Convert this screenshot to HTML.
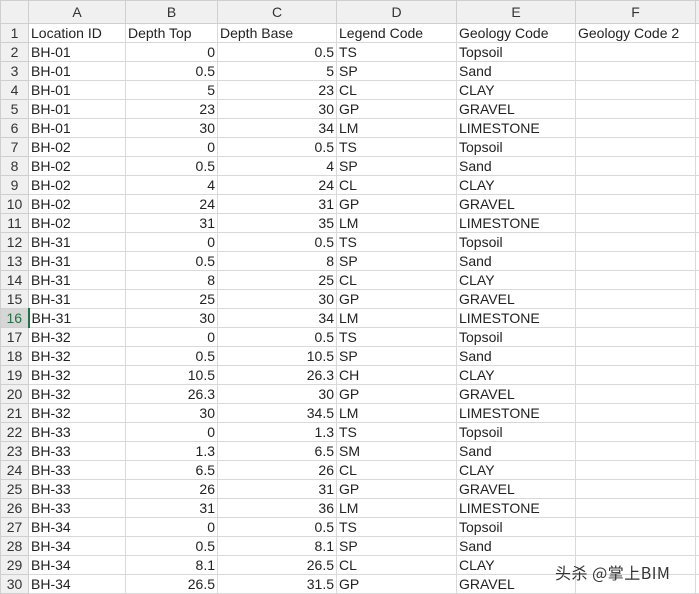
<!DOCTYPE html>
<html><head><meta charset="utf-8"><style>
*{margin:0;padding:0;box-sizing:border-box}
body{width:699px;height:594px;overflow:hidden;background:#fff;font-family:"Liberation Sans","Noto Sans CJK SC",sans-serif;font-size:14px;color:#222;position:relative}
table{border-collapse:collapse;table-layout:fixed;position:absolute;left:0;top:0;width:699px}
td{border:1px solid #d9d9d9;height:19px;line-height:17px;padding:0 2px;white-space:nowrap;overflow:hidden}
tr.h td{height:23px;background:#f0f0f0;text-align:center;color:#333;border-color:#cfcfcf}
td.r{background:#f0f0f0;text-align:center;color:#333;border-color:#cfcfcf;padding:0}
td.n{text-align:right}
td.sel{background:#d6d6d6;border-right:2px solid #217346;color:#217346}
.wm{position:absolute;left:555px;top:560px;font-size:16px;color:#333;font-family:"Noto Sans CJK SC",sans-serif;letter-spacing:0.5px}
</style></head><body>
<table>
<colgroup><col style="width:28px"><col style="width:97px"><col style="width:92px"><col style="width:119px"><col style="width:120px"><col style="width:119px"><col style="width:120px"><col style="width:4px"></colgroup>
<tr class="h"><td></td><td>A</td><td>B</td><td>C</td><td>D</td><td>E</td><td>F</td><td></td></tr>
<tr><td class="r">1</td><td>Location ID</td><td>Depth Top</td><td>Depth Base</td><td>Legend Code</td><td>Geology Code</td><td>Geology Code 2</td><td></td></tr>
<tr><td class="r">2</td><td>BH-01</td><td class="n">0</td><td class="n">0.5</td><td>TS</td><td>Topsoil</td><td></td><td></td></tr>
<tr><td class="r">3</td><td>BH-01</td><td class="n">0.5</td><td class="n">5</td><td>SP</td><td>Sand</td><td></td><td></td></tr>
<tr><td class="r">4</td><td>BH-01</td><td class="n">5</td><td class="n">23</td><td>CL</td><td>CLAY</td><td></td><td></td></tr>
<tr><td class="r">5</td><td>BH-01</td><td class="n">23</td><td class="n">30</td><td>GP</td><td>GRAVEL</td><td></td><td></td></tr>
<tr><td class="r">6</td><td>BH-01</td><td class="n">30</td><td class="n">34</td><td>LM</td><td>LIMESTONE</td><td></td><td></td></tr>
<tr><td class="r">7</td><td>BH-02</td><td class="n">0</td><td class="n">0.5</td><td>TS</td><td>Topsoil</td><td></td><td></td></tr>
<tr><td class="r">8</td><td>BH-02</td><td class="n">0.5</td><td class="n">4</td><td>SP</td><td>Sand</td><td></td><td></td></tr>
<tr><td class="r">9</td><td>BH-02</td><td class="n">4</td><td class="n">24</td><td>CL</td><td>CLAY</td><td></td><td></td></tr>
<tr><td class="r">10</td><td>BH-02</td><td class="n">24</td><td class="n">31</td><td>GP</td><td>GRAVEL</td><td></td><td></td></tr>
<tr><td class="r">11</td><td>BH-02</td><td class="n">31</td><td class="n">35</td><td>LM</td><td>LIMESTONE</td><td></td><td></td></tr>
<tr><td class="r">12</td><td>BH-31</td><td class="n">0</td><td class="n">0.5</td><td>TS</td><td>Topsoil</td><td></td><td></td></tr>
<tr><td class="r">13</td><td>BH-31</td><td class="n">0.5</td><td class="n">8</td><td>SP</td><td>Sand</td><td></td><td></td></tr>
<tr><td class="r">14</td><td>BH-31</td><td class="n">8</td><td class="n">25</td><td>CL</td><td>CLAY</td><td></td><td></td></tr>
<tr><td class="r">15</td><td>BH-31</td><td class="n">25</td><td class="n">30</td><td>GP</td><td>GRAVEL</td><td></td><td></td></tr>
<tr><td class="r sel">16</td><td>BH-31</td><td class="n">30</td><td class="n">34</td><td>LM</td><td>LIMESTONE</td><td></td><td></td></tr>
<tr><td class="r">17</td><td>BH-32</td><td class="n">0</td><td class="n">0.5</td><td>TS</td><td>Topsoil</td><td></td><td></td></tr>
<tr><td class="r">18</td><td>BH-32</td><td class="n">0.5</td><td class="n">10.5</td><td>SP</td><td>Sand</td><td></td><td></td></tr>
<tr><td class="r">19</td><td>BH-32</td><td class="n">10.5</td><td class="n">26.3</td><td>CH</td><td>CLAY</td><td></td><td></td></tr>
<tr><td class="r">20</td><td>BH-32</td><td class="n">26.3</td><td class="n">30</td><td>GP</td><td>GRAVEL</td><td></td><td></td></tr>
<tr><td class="r">21</td><td>BH-32</td><td class="n">30</td><td class="n">34.5</td><td>LM</td><td>LIMESTONE</td><td></td><td></td></tr>
<tr><td class="r">22</td><td>BH-33</td><td class="n">0</td><td class="n">1.3</td><td>TS</td><td>Topsoil</td><td></td><td></td></tr>
<tr><td class="r">23</td><td>BH-33</td><td class="n">1.3</td><td class="n">6.5</td><td>SM</td><td>Sand</td><td></td><td></td></tr>
<tr><td class="r">24</td><td>BH-33</td><td class="n">6.5</td><td class="n">26</td><td>CL</td><td>CLAY</td><td></td><td></td></tr>
<tr><td class="r">25</td><td>BH-33</td><td class="n">26</td><td class="n">31</td><td>GP</td><td>GRAVEL</td><td></td><td></td></tr>
<tr><td class="r">26</td><td>BH-33</td><td class="n">31</td><td class="n">36</td><td>LM</td><td>LIMESTONE</td><td></td><td></td></tr>
<tr><td class="r">27</td><td>BH-34</td><td class="n">0</td><td class="n">0.5</td><td>TS</td><td>Topsoil</td><td></td><td></td></tr>
<tr><td class="r">28</td><td>BH-34</td><td class="n">0.5</td><td class="n">8.1</td><td>SP</td><td>Sand</td><td></td><td></td></tr>
<tr><td class="r">29</td><td>BH-34</td><td class="n">8.1</td><td class="n">26.5</td><td>CL</td><td>CLAY</td><td></td><td></td></tr>
<tr><td class="r">30</td><td>BH-34</td><td class="n">26.5</td><td class="n">31.5</td><td>GP</td><td>GRAVEL</td><td></td><td></td></tr>
</table>
<div class="wm">头杀 @掌上BIM</div>
</body></html>
